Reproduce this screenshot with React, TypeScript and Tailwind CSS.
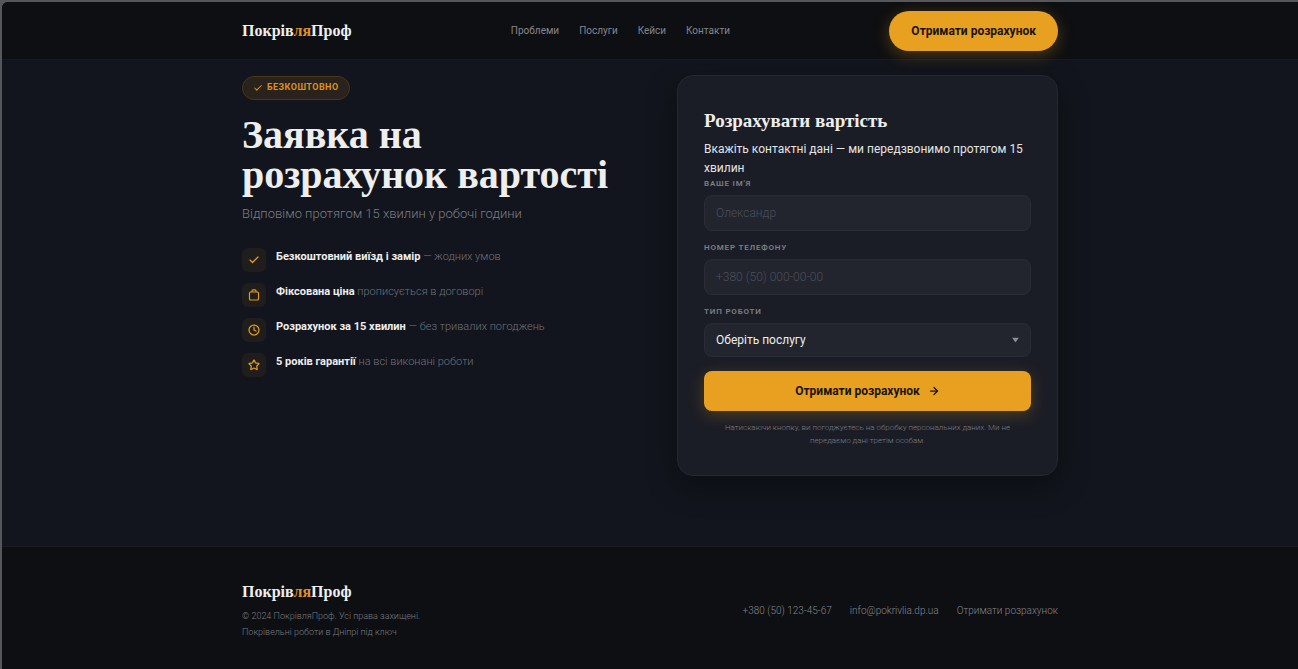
import React from 'react';
import { ArrowRight, Check, Clock, Star } from 'lucide-react';

const NAV_LINKS = [
  { href: '#problems', label: 'Проблеми' },
  { href: '#services', label: 'Послуги' },
  { href: '#cases', label: 'Кейси' },
  { href: '#contacts', label: 'Контакти' },
];

const BagIcon = () => (
  <svg viewBox="0 0 12 12" className="h-3 w-3" fill="none" stroke="currentColor" strokeWidth="1.2" strokeLinejoin="round">
    <rect x="1.5" y="3" width="9" height="8" rx="1" />
    <path d="M4 3V1.8a1 1 0 0 1 1-1h2a1 1 0 0 1 1 1V3" />
  </svg>
);

const BENEFITS = [
  { icon: <Check className="h-3 w-3" strokeWidth={2.5} />, title: 'Безкоштовний виїзд і замір', text: '— жодних умов' },
  { icon: <BagIcon />, title: 'Фіксована ціна', text: 'прописується в договорі' },
  { icon: <Clock className="h-3 w-3" strokeWidth={2.5} />, title: 'Розрахунок за 15 хвилин', text: '— без тривалих погоджень' },
  { icon: <Star className="h-3 w-3" strokeWidth={2.5} />, title: '5 років гарантії', text: 'на всі виконані роботи' },
];

const Logo = () => (
  <a href="#top" className="block font-['Liberation_Serif',serif] text-[16px] leading-6 font-bold text-[#eeeeec]">
    Покрів<span className="text-[#e0922a]">ля</span>Проф
  </a>
);

const Header = () => (
  <header className="relative z-10 border-b border-[#181a1d] bg-[#0e0f12]">
    <div className="mx-auto flex h-[57px] max-w-[816px] items-center justify-between">
      <Logo />
      <nav className="flex gap-5 text-[10px] text-[#85868a]">
        {NAV_LINKS.map((link) => (
          <a key={link.href} href={link.href}>{link.label}</a>
        ))}
      </nav>
      <button
        type="button"
        className="h-10 rounded-full bg-[#e8a020] px-[22px] text-[12px] font-bold text-[#17140f] shadow-[0_4px_16px_rgba(232,160,32,0.3)]"
      >
        Отримати розрахунок
      </button>
    </div>
  </header>
);

const Intro = () => (
  <div className="pt-px">
    <div className="inline-flex h-6 items-center gap-1 rounded-full border border-[#4a361b] bg-[#29221d] px-2.5 text-[9px] font-bold tracking-wider text-[#dc921e]">
      <Check className="h-2.5 w-2.5" strokeWidth={2.5} />
      БЕЗКОШТОВНО
    </div>
    <h1 className="mt-[15px] font-['Liberation_Serif',serif] text-[40px] leading-10 font-bold text-[#eeeeec]">
      Заявка на<br />розрахунок вартості
    </h1>
    <p className="mt-[9px] text-[13px] leading-5 font-light text-[#7c7e85]">
      Відповімо протягом 15 хвилин у робочі години
    </p>
    <ul className="mt-6 flex flex-col gap-[11px]">
      {BENEFITS.map((item) => (
        <li key={item.title} className="flex gap-2.5">
          <span className="flex h-6 w-6 shrink-0 items-center justify-center rounded-md bg-[#1f1e1d] text-[#e09a20]">
            {item.icon}
          </span>
          <p className="text-[11px] leading-[18px] font-light text-[#70727a]">
            <strong className="font-bold text-[#eeeeec]">{item.title}</strong> {item.text}
          </p>
        </li>
      ))}
    </ul>
  </div>
);

const LABEL = 'mb-[5px] block text-[8px] leading-3 font-semibold tracking-widest text-[#7d7f86]';
const FIELD = 'block w-full rounded-lg border border-[#2b2d36] bg-[#22242e] px-[11px] text-[12px] text-[#eeeeec]';

const RequestForm = () => (
  <form
    className="rounded-2xl border border-[#262831] bg-[#1b1d26] px-[26px] pt-[33px] pb-7 shadow-[0_10px_30px_rgba(0,0,0,0.35)]"
    onSubmit={(e) => e.preventDefault()}
  >
    <h2 className="font-['Liberation_Serif',serif] text-[19px] leading-6 font-bold text-[#eeeeec]">
      Розрахувати вартість
    </h2>
    <p className="mt-[7px] text-[12px] leading-[19px] text-[#e4e4e4]">
      Вкажіть контактні дані — ми передзвонимо протягом 15 хвилин
    </p>

    <label htmlFor="name" className={LABEL}>ВАШЕ ІМ'Я</label>
    <input id="name" type="text" placeholder="Олександр" className={`${FIELD} h-9 placeholder:font-light placeholder:text-[#4c4f59]`} />

    <label htmlFor="phone" className={`${LABEL} mt-[11px]`}>НОМЕР ТЕЛЕФОНУ</label>
    <input id="phone" type="tel" placeholder="+380 (50) 000-00-00" className={`${FIELD} h-9 placeholder:font-light placeholder:text-[#4c4f59]`} />

    <label htmlFor="service" className={`${LABEL} mt-[11px]`}>ТИП РОБОТИ</label>
    <div className="relative">
      <select id="service" defaultValue="" className={`${FIELD} h-[34px] appearance-none`}>
        <option value="">Оберіть послугу</option>
        <option value="repair">Ремонт даху</option>
        <option value="new">Новий дах</option>
      </select>
      <svg viewBox="0 0 7 5" className="pointer-events-none absolute top-1/2 right-3 h-[5px] w-[7px] -translate-y-1/2 text-[#8c8e94]" fill="currentColor">
        <path d="M0 0h7L3.5 5z" />
      </svg>
    </div>

    <button
      type="submit"
      className="mt-3.5 flex h-10 w-full items-center justify-center gap-2 rounded-lg bg-[#e8a020] text-[12px] font-bold text-[#17140f] shadow-[0_4px_16px_rgba(232,160,32,0.25)]"
    >
      Отримати розрахунок
      <ArrowRight className="h-3 w-3" strokeWidth={2.5} />
    </button>
    <p className="mt-2.5 text-center text-[8px] leading-[13px] font-light text-[#7b7d84]">
      Натискаючи кнопку, ви погоджуєтесь на обробку персональних даних. Ми не<br />передаємо дані третім особам.
    </p>
  </form>
);

const Footer = () => (
  <footer className="grow border-t border-[#1b1c20] bg-[#0e0f12] pt-[33px] pb-6">
    <div className="mx-auto flex max-w-[816px] items-center justify-between">
      <div>
        <Logo />
        <p className="mt-1 text-[9px] leading-4 font-light text-[#797a7f]">
          © 2024 ПокрівляПроф. Усі права захищені.<br />Покрівельні роботи в Дніпрі під ключ
        </p>
      </div>
      <div className="flex gap-[18px] text-[10px] font-light text-[#85868b]">
        <a href="tel:+380501234567">+380 (50) 123-45-67</a>
        <a href="mailto:info@pokrivlia.dp.ua">info@pokrivlia.dp.ua</a>
        <a href="#request">Отримати розрахунок</a>
      </div>
    </div>
  </footer>
);

export default function App() {
  return (
    <div id="top" className="flex min-h-screen bg-[#55575b] pt-0.5 pl-0.5 font-[Roboto,sans-serif]">
      <div className="flex grow flex-col overflow-hidden rounded-tl-md bg-[#12151d]">
        <Header />
        <main className="pt-[15px] pb-[70px]">
          <div className="mx-auto grid max-w-[816px] grid-cols-2 gap-[54px]">
            <Intro />
            <RequestForm />
          </div>
        </main>
        <Footer />
      </div>
    </div>
  );
}
